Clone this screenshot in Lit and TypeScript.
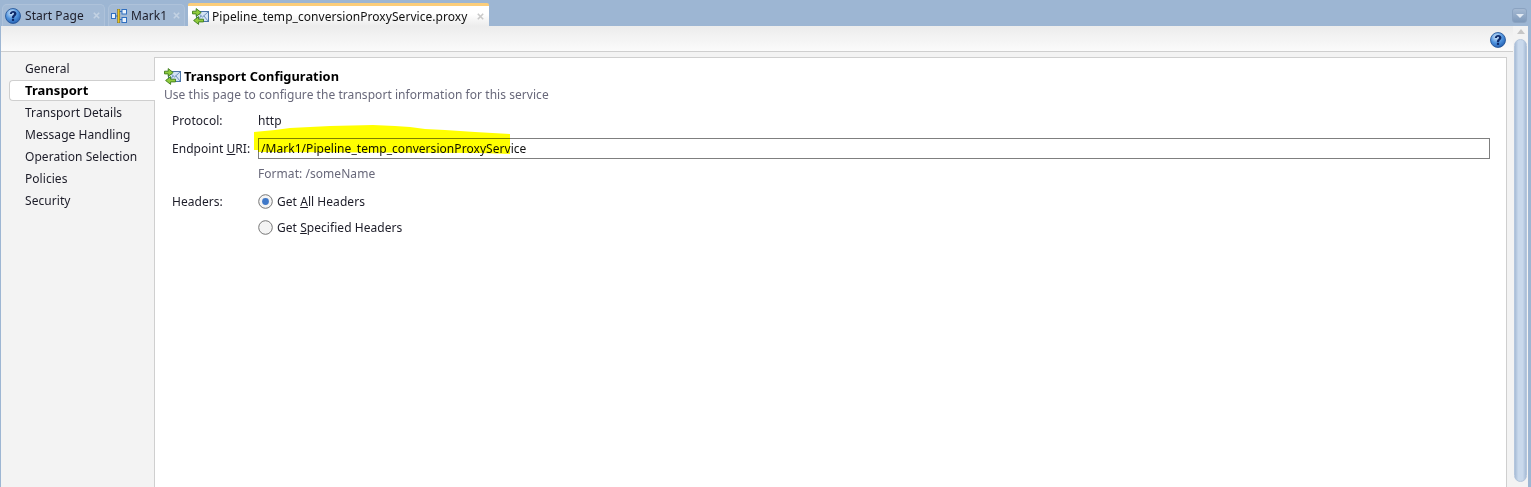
import { LitElement, html, css } from "lit";
import { customElement } from "lit/decorators.js";

const transportIcon = html`<svg class="ticon" width="17" height="17" viewBox="0 0 17 17">
  <rect x="4.5" y="3.5" width="12" height="10" fill="#d3e3f5" stroke="#4a74a6"/>
  <path d="M5 4l5.5 5L16 4M5 13l4.2-5.2M16 13l-4.2-5.2" fill="none" stroke="#6f93bd"/>
  <path d="M.5 3.2h3.7V.6l5 3.9-5 3.9V5.9H.5z" fill="#8fcb3c" stroke="#3c7a1c" stroke-width=".9"/>
  <path d="M11.5 11.2H6.6V8.6l-5 3.9 5 3.9v-2.5h4.9z" fill="#8fcb3c" stroke="#3c7a1c" stroke-width=".9"/>
</svg>`;

const helpIcon = html`<svg class="hicon" width="16" height="16" viewBox="0 0 16 16">
  <defs><radialGradient id="hg" cx=".4" cy=".3" r=".8"><stop offset="0" stop-color="#d5e9fb"/><stop offset=".5" stop-color="#4f93de"/><stop offset="1" stop-color="#1a53a5"/></radialGradient></defs>
  <circle cx="8" cy="8" r="7.5" fill="url(#hg)" stroke="#1f4f93" stroke-width=".8"/>
  <path d="M4.8 6C4.9 4 6.4 2.9 8.2 2.9c2 0 3.3 1.1 3.3 2.8 0 2.3-2.4 2.3-2.4 4.2H6.9c0-2.7 2.1-2.8 2.1-4.1 0-.6-.4-1-.9-1-.6 0-1 .5-1.1 1.2z" fill="#0d2a6b"/>
  <rect x="6.9" y="10.7" width="2.2" height="2.2" fill="#0d2a6b"/>
</svg>`;

const compositeIcon = html`<svg width="16" height="14" viewBox="0 0 16 14">
  <rect x=".5" y="4.5" width="4" height="5" fill="#e9f2fc" stroke="#2f6fc0"/>
  <rect x="11" y=".5" width="4.5" height="4.5" fill="#e9f2fc" stroke="#2f6fc0"/>
  <rect x="11" y="8.5" width="4.5" height="5" fill="#e9f2fc" stroke="#2f6fc0"/>
  <path d="M4.5 7h3M8 2.5h3M8 10.5h3" stroke="#2f6fc0" fill="none"/>
  <rect x="6.6" y="0" width="2.2" height="14" fill="#e8c320" stroke="#6f5f16" stroke-width=".5"/>
</svg>`;

const closeIcon = html`<svg class="close" width="7" height="7" viewBox="0 0 7 7"><path d="M.8.8l5.4 5.4M6.2.8L.8 6.2" stroke="currentColor" stroke-width="1.6"/></svg>`;

const navItems = ["General", "Transport", "Transport Details", "Message Handling", "Operation Selection", "Policies", "Security"];

@customElement("app-root")
export class AppRoot extends LitElement {
  static styles = css`
    :host {
      display: block;
      height: 487px;
      overflow: hidden;
      background: #9db6d3;
      font-family: "Noto Sans", Tahoma, sans-serif;
      font-size: 12px;
      letter-spacing: 0.05px;
      color: #1c1c28;
      position: relative;
    }
    .tabs {
      height: 26px;
      display: flex;
      align-items: flex-end;
      padding: 0 3px 0 2px;
      box-sizing: border-box;
      gap: 3px;
    }
    .tab {
      height: 22px;
      display: flex;
      align-items: center;
      box-sizing: border-box;
      background: #a3bad5;
      border: 1px solid #aec2da;
      border-bottom: 0;
      border-radius: 5px 5px 0 0;
      color: #1c1c28;
      padding-left: 2px;
      gap: 4px;
    }
    .tab .close { color: #c3d2e3; margin-left: auto; }
    .t1 { width: 103px; padding-right: 4px; }
    .t2 { width: 77px; padding-right: 4px; }
    .t3 {
      width: 301px;
      background: linear-gradient(#fff 0, #fff 40%, #ececec 100%);
      border: 0;
      border-top: 3px solid #fbcd7a;
      border-radius: 2px 2px 0 0;
      padding-left: 4px;
      padding-right: 5px;
      gap: 3px;
      height: 23px;
      color: #111;
    }
    .t3 .close { color: #c9c9c9; }
    .spacer { flex: 1; }
    .drop {
      width: 15px;
      height: 15px;
      margin-bottom: 3px;
      margin-right: 1px;
      border-radius: 3px;
      background: linear-gradient(#a6bad3, #7f9abb);
      border: 1px solid #8ba3c1;
      box-sizing: border-box;
      display: flex;
      align-items: center;
      justify-content: center;
    }
    .drop i {
      width: 0; height: 0;
      border-left: 4px solid transparent;
      border-right: 4px solid transparent;
      border-top: 4px solid #e3ebf4;
    }
    .frame {
      margin: 0 3px 0 1px;
      height: 461px;
      background: #f3f3f3;
      display: flex;
      flex-direction: column;
    }
    .toolbar {
      height: 26px;
      box-sizing: border-box;
      background: linear-gradient(#ececec, #fbfbfb);
      border-bottom: 1px solid #cfcfcf;
      display: flex;
      justify-content: flex-end;
      align-items: center;
      padding: 3px 22px 0 0;
    }
    .main { flex: 1; display: flex; min-height: 0; }
    .nav {
      width: 153px;
      flex: none;
      box-sizing: border-box;
      padding-top: 6px;
    }
    .nav-item {
      height: 22px;
      line-height: 21px;
      padding-left: 24px;
      box-sizing: border-box;
    }
    .nav-item.sel {
      margin-left: 8px;
      padding-left: 15px;
      margin-right: -1px;
      height: 21px;
      margin-bottom: 1px;
      font-weight: 700;
      font-size: 13px;
      color: #000;
      background: #fff;
      border: 1px solid #cfcfcf;
      border-right: 0;
      border-radius: 4px 0 0 4px;
      position: relative;
      z-index: 1;
      line-height: 19px;
    }
    .card {
      width: 1353px;
      flex: none;
      margin-top: 5px;
      background: #fff;
      border: 1px solid #cfcfcf;
      border-bottom: 0;
      box-sizing: border-box;
      padding: 10px 9px 0;
    }
    .title {
      display: flex;
      align-items: center;
      gap: 3px;
      font-weight: 700;
      font-size: 12.8px;
      color: #000;
      height: 17px;
    }
    .title span { padding-bottom: 2px; }
    .desc { color: #68687a; height: 18px; line-height: 19px; }
    .form {
      display: grid;
      grid-template-columns: 86px 1232px;
      padding: 9px 0 0 8px;
      align-items: center;
    }
    .row1 { height: 26px; }
    .input {
      height: 21px;
      box-sizing: border-box;
      border: 1px solid #7f7f7f;
      padding-left: 2px;
      line-height: 19px;
      color: #111;
    }
    .fmt { color: #68687a; height: 29px; line-height: 30px; }
    .radio { display: flex; align-items: center; gap: 4px; height: 26px; }
    .radio svg { flex: none; }
    .scroll {
      width: 15px;
      flex: none;
      display: flex;
      flex-direction: column;
      align-items: center;
      margin-left: 6px;
      position: relative;
      top: -26px;
      margin-bottom: -26px;
      padding-top: 3px;
      box-sizing: border-box;
      background: #f3f3f3;
    }
    .scroll i {
      width: 0; height: 0;
      border-left: 4px solid transparent;
      border-right: 4px solid transparent;
      border-bottom: 5px solid #c6c6c6;
      flex: none;
    }
    .thumb {
      margin-top: 5px;
      width: 13px;
      height: 443px;
      flex: none;
      box-sizing: border-box;
      border-radius: 7px;
      background: linear-gradient(90deg, #a7bcd6, #c9d9ec 30%, #c9d9ec 70%, #a7bcd6);
      border: 1px solid #b3c5dc;
    }
    .mark {
      position: absolute;
      left: 0;
      top: 0;
      mix-blend-mode: multiply;
      pointer-events: none;
    }
    u { text-underline-offset: 1px; }
  `;

  render() {
    return html`
      <div class="tabs">
        <div class="tab t1">${helpIcon}<span>Start Page</span>${closeIcon}</div>
        <div class="tab t2">${compositeIcon}<span>Mark1</span>${closeIcon}</div>
        <div class="tab t3">${transportIcon}<span>Pipeline_temp_conversionProxyService.proxy</span>${closeIcon}</div>
        <div class="spacer"></div>
        <div class="drop"><i></i></div>
      </div>
      <div class="frame">
        <div class="toolbar">${helpIcon}</div>
        <div class="main">
          <div class="nav">
            ${navItems.map((n) => html`<div class="nav-item ${n === "Transport" ? "sel" : ""}">${n}</div>`)}
          </div>
          <div class="card">
            <div class="title">${transportIcon}<span>Transport Configuration</span></div>
            <div class="desc">Use this page to configure the transport information for this service</div>
            <div class="form">
              <div class="row1">Protocol:</div><div class="row1">http</div>
              <div>Endpoint <u>U</u>RI:</div><div class="input">/Mark1/Pipeline_temp_conversionProxyService</div>
              <div></div><div class="fmt">Format: /someName</div>
              <div>Headers:</div>
              <div class="radio">
                <svg width="15" height="15" viewBox="0 0 15 15"><circle cx="7.5" cy="7.5" r="6.8" fill="#f4f4f4" stroke="#777"/><circle cx="7.5" cy="7.5" r="3.4" fill="#3f78c8"/></svg>
                <span>Get <u>A</u>ll Headers</span>
              </div>
              <div></div>
              <div class="radio">
                <svg width="15" height="15" viewBox="0 0 15 15"><circle cx="7.5" cy="7.5" r="6.8" fill="#f4f4f4" stroke="#777"/></svg>
                <span>Get <u>S</u>pecified Headers</span>
              </div>
            </div>
          </div>
          <div class="scroll"><i></i><div class="thumb"></div></div>
        </div>
      </div>
      <svg class="mark" width="1531" height="487">
        <polygon fill="#ffff00" points="254,132 275,130 290,128 310,127 330,126 373,125 395,126 410,127 425,129 445,130 475,132 510,134 510,154 480,153 258,152 258,150 254,150"/>
      </svg>
    `;
  }
}
